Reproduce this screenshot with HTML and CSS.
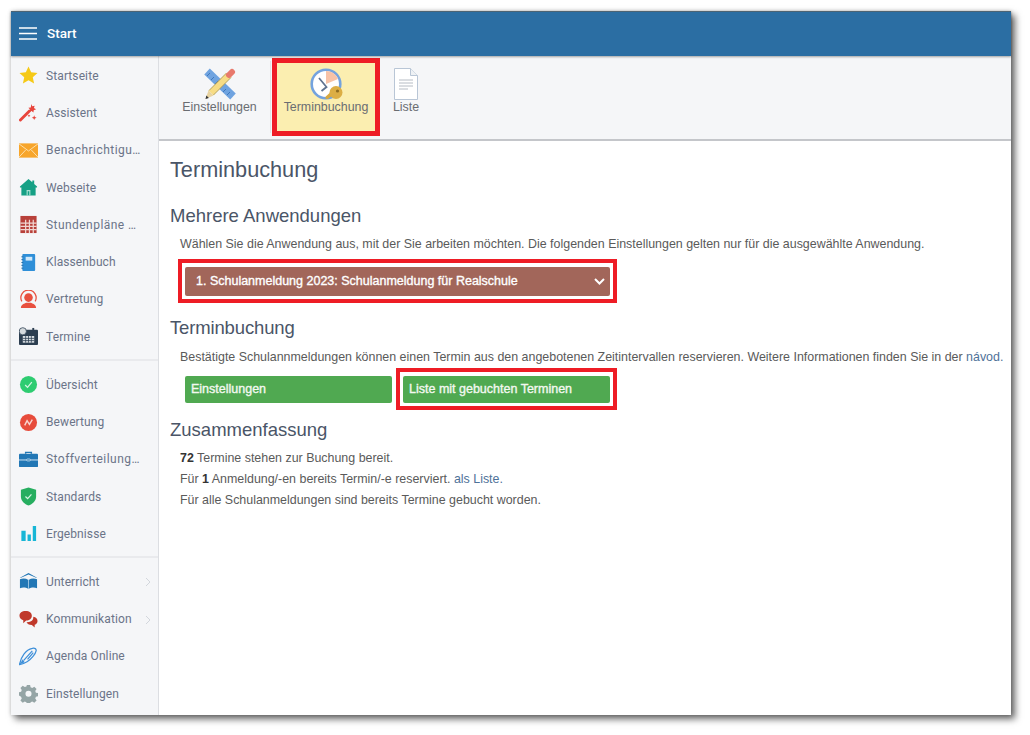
FILE: index.html
```html
<!DOCTYPE html>
<html lang="de">
<head>
<meta charset="utf-8">
<title>Terminbuchung</title>
<link rel="stylesheet" href="styles.css">
</head>
<body>
<div class="window">
  <header class="topbar">
    <svg class="burger" width="18" height="13" viewBox="0 0 18 13"><path d="M0 1h18M0 6.500h18M0 12h18" stroke="#fff" stroke-width="1.500"/></svg>
    <span class="top-title">Start</span>
  </header>
  <div class="body">
    <nav class="sidebar">
      <div class="group">
        <a class="item"><svg class="ico" viewBox="0 0 20 20"><path d="M10 .5l2.800 6.200 6.700.7-5 4.500 1.400 6.600L10 15.100l-5.900 3.400 1.400-6.600-5-4.500 6.700-.7z" fill="#f5c916"/></svg><span>Startseite</span></a>
        <a class="item"><svg class="ico" viewBox="0 0 20 20"><path d="M1.500 18L11 8.500" stroke="#e8453c" stroke-width="3" stroke-linecap="round"/><path d="M13 1l1 2.500 2.500-.7-.8 2.500 2.300 1.200-2.500 1-.3 2.500-2-1.700-2.300 1 .8-2.500-1.800-1.800 2.500-.2z" fill="#e8453c"/><path d="M16 13l.7 1.800 1.800.7-1.800.7-.7 1.800-.7-1.800-1.800-.7 1.800-.7zM10.500 12l.5 1 1 .5-1 .5-.5 1-.5-1-1-.5 1-.5z" fill="#e8453c"/></svg><span>Assistent</span></a>
        <a class="item"><svg class="ico" viewBox="0 0 20 20"><rect y="2.500" width="20" height="15" fill="#f7a52b"/><path d="M0 3l10 7.500L20 3M0 17l7-7.500M20 17l-7-7.500" fill="none" stroke="#fde2b0" stroke-width="1"/></svg><span class="trunc">Benachrichtigu…</span></a>
        <a class="item"><svg class="ico" viewBox="0 0 20 20"><path d="M10 1L1 9v1h1.500v8.500h15V10H19V9l-3-2.700V2.500h-2v2z" fill="#16a085"/><path d="M8 18.500v-6h4v6h-1.200v-4.500H9.200v4.500z" fill="#a8e0d2"/></svg><span>Webseite</span></a>
        <a class="item"><svg class="ico" viewBox="0 0 20 20"><rect x="1.500" y="1" width="17" height="18" fill="#b8403a"/><path d="M7 5v14M11 5v14M15 5v14M1.500 8.500h17M1.500 12h17M1.500 15.500h17" stroke="#f0d6d2" stroke-width="1.300"/></svg><span class="trunc">Stundenpläne …</span></a>
        <a class="item"><svg class="ico" viewBox="0 0 20 20"><rect x="3.500" y="1" width="13.500" height="18" rx="1" fill="#2f8fd8"/><rect x="7" y="4" width="7" height="4" fill="#cfe8fa"/><path d="M2.500 4h2M2.500 7h2M2.500 10h2M2.500 13h2M2.500 16h2" stroke="#1d6aa5" stroke-width="1"/></svg><span>Klassenbuch</span></a>
        <a class="item"><svg class="ico" viewBox="0 0 20 20"><path d="M3 12A8 8 0 1 1 17 12" fill="none" stroke="#e8503f" stroke-width="1.300"/><circle cx="10" cy="8" r="4.500" fill="#e8503f"/><path d="M2 19c0-4 4-4.500 5.500-5.500h5C14 14.500 18 15 18 19z" fill="#e8503f"/></svg><span>Vertretung</span></a>
        <a class="item"><svg class="ico" viewBox="0 0 20 20"><rect y="3" width="20" height="16" rx="1" fill="#2c3e50"/><circle cx="4" cy="4.500" r="3.800" fill="#d5dadd" stroke="#2c3e50" stroke-width=".8"/><rect x="14" y="1" width="2" height="4" fill="#2c3e50"/><path d="M4 9.500h12v7H4z" fill="#d9dee2"/><path d="M7 9.500v7M10 9.500v7M13 9.500v7M4 12h12M4 14.300h12" stroke="#2c3e50" stroke-width=".8"/></svg><span>Termine</span></a>
      </div>
      <div class="group">
        <a class="item"><svg class="ico" viewBox="0 0 20 20"><circle cx="10" cy="10" r="9" fill="#2ecc71"/><path d="M6.500 10.500l2.500 2.500 4.500-5.500" fill="none" stroke="#d6f5e3" stroke-width="1.300"/></svg><span>Übersicht</span></a>
        <a class="item"><svg class="ico" viewBox="0 0 20 20"><circle cx="10" cy="10" r="9" fill="#e74c3c"/><path d="M6 13l2.500-5 2.500 4 3-5" fill="none" stroke="#f9d4cf" stroke-width="1.500"/></svg><span>Bewertung</span></a>
        <a class="item"><svg class="ico" viewBox="0 0 20 20"><path d="M7 4V2.500h6V4" fill="none" stroke="#2277b5" stroke-width="1.500"/><rect y="4" width="20" height="14" rx="1" fill="#2277b5"/><path d="M0 10.500h20" stroke="#d5e8f5" stroke-width="1"/><rect x="8" y="9.500" width="4" height="2" rx="1" fill="#2277b5" stroke="#d5e8f5" stroke-width=".8"/></svg><span class="trunc">Stoffverteilung…</span></a>
        <a class="item"><svg class="ico" viewBox="0 0 20 20"><path d="M10 .5L18 3v7c0 5-4 8-8 9.500C6 18 2 15 2 10V3z" fill="#27ae60"/><path d="M6.800 10l2.300 2.300 4-4.500" fill="none" stroke="#d6f5e3" stroke-width="1.300"/></svg><span>Standards</span></a>
        <a class="item"><svg class="ico" viewBox="0 0 20 20"><path d="M2.500 7h4.500v11H2.500zM9 11h3.500v7H9zM14.500 2H18v16h-3.500z" fill="#17b6d6"/></svg><span>Ergebnisse</span></a>
      </div>
      <div class="group group-last">
        <a class="item"><svg class="ico" viewBox="0 0 20 20"><path d="M10 1L1 6h1l8-3.500L18 6h1z" fill="#2277b5"/><path d="M1 7.500c3-1 6-1 9 .8 3-1.800 6-1.800 9-.8V17c-3-1-6-1-9 1-3-2-6-2-9-1z" fill="#2277b5"/><path d="M10 8.300V18" stroke="#bcd9ee" stroke-width=".8"/></svg><span>Unterricht</span><svg class="chev" width="6" height="10" viewBox="0 0 6 10"><path d="M1 1l4 4-4 4" fill="none" stroke="#d3d7dd" stroke-width="1"/></svg></a>
        <a class="item"><svg class="ico" viewBox="0 0 20 20"><path d="M7 1c4 0 6.500 2 6.500 5s-2.500 5-6 5l-3 3v-3.300C2 10 .5 8.500.5 6 .5 3 3 1 7 1z" fill="#c0392b"/><path d="M15 7c3 .5 4.500 2 4.500 4.500 0 2-1 3.300-3 4v3l-3-2.800c-3 0-5-1-5.500-3 4 .5 7.500-2 7-5.700z" fill="#c0392b"/></svg><span>Kommunikation</span><svg class="chev" width="6" height="10" viewBox="0 0 6 10"><path d="M1 1l4 4-4 4" fill="none" stroke="#d3d7dd" stroke-width="1"/></svg></a>
        <a class="item"><svg class="ico" viewBox="0 0 20 20"><path d="M.5 18.500C2 10 7 3 14 1.500c2.500-.8 4.500.5 4 2.500-.5 3-5 9-9.500 11.500C6 17 3 18 .5 18.500z" fill="none" stroke="#3d8fd9" stroke-width="1.300"/><path d="M5 14L14 4M9 13l6-7" stroke="#3d8fd9" stroke-width="1.300"/><path d="M.5 18.500L4 13l2 3z" fill="#3d8fd9"/></svg><span>Agenda Online</span></a>
        <a class="item"><svg class="ico" viewBox="0 0 20 20"><path fill-rule="evenodd" d="M8.300 1h3.400l.5 2.500 1.700.7 2.200-1.400 2.400 2.400-1.400 2.200.7 1.700 2.200.5v3.400l-2.200.5-.7 1.700 1.400 2.200-2.400 2.400-2.200-1.400-1.700.7-.5 2.200H8.300l-.5-2.200-1.700-.7-2.200 1.400-2.400-2.400 1.400-2.200-.7-1.700L0 12v-3.400l2.200-.5.7-1.700-1.400-2.200 2.400-2.400 2.200 1.400 1.700-.7zM10 7a3.200 3.200 0 1 0 0 6.400A3.200 3.200 0 0 0 10 7z" fill="#95a5a6"/></svg><span>Einstellungen</span></a>
      </div>
    </nav>
    <div class="main">
      <div class="toolbar">
        <a class="tool tool-first"><svg class="tool-ico" viewBox="0 0 32 32"><path d="M3 3.500l26 25" stroke="#6fa3e0" stroke-width="8"/><path d="M3 8l3-3M7 12l3-3M11 16l3-3M15 20l3-3M19 24l3-3M23 27l3-3" stroke="#3f78bd" stroke-width="1"/><path d="M7 25L25 7" stroke="#f7dc85" stroke-width="6.500"/><path d="M5 22.500L22.500 5M9.500 27L27 9.500" stroke="#a58f4a" stroke-width=".8"/><path d="M25 7l3-3" stroke="#e8796c" stroke-width="6" stroke-linecap="round"/><path d="M4.500 22.500l5 5L1.500 31z" fill="#e8d3a0"/><path d="M1.500 31l.9-3.400 2.500 2.500z" fill="#333"/></svg><span>Einstellungen</span></a>
        <div class="tool-sep"></div>
        <a class="tool tool-active"><svg class="tool-ico tool-ico-wide" viewBox="0 0 34 32"><circle cx="17" cy="16" r="14.300" fill="#fff" stroke="#74a3de" stroke-width="2.600"/><path d="M17 16V3a13 13 0 0 1 12 8z" fill="#f7c2a6"/><path d="M10 10l7.500 9-5 4" fill="none" stroke="#5f7390" stroke-width="1.800"/><path d="M24 27l-5 4-2.500-.2 0-2 5.500-5z" fill="#d8a93e"/><circle cx="27" cy="24.500" r="6.500" fill="#dcae45"/><circle cx="28.500" cy="23" r="1.600" fill="#8f6d20"/></svg><span>Terminbuchung</span></a>
        <a class="tool tool-list"><svg class="tool-ico" viewBox="0 0 32 32"><path d="M4.500 .5h16l7 7v24h-23z" fill="#fff" stroke="#b9c6d6"/><path d="M20.500 .5v7h7" fill="#eef1f4" stroke="#b9c6d6"/><path d="M9 12h14M9 15h14M9 18h14M9 21h9" stroke="#b6bcc4" stroke-width="1"/></svg><span>Liste</span></a>
      </div>
      <main class="content">
        <h1>Terminbuchung</h1>
        <h2 class="h-first">Mehrere Anwendungen</h2>
        <p class="lead lead-first">Wählen Sie die Anwendung aus, mit der Sie arbeiten möchten. Die folgenden Einstellungen gelten nur für die ausgewählte Anwendung.</p>
        <div class="select-mark">
          <div class="select"><span>1. Schulanmeldung 2023: Schulanmeldung für Realschule</span><svg width="11" height="7" viewBox="0 0 11 7"><path d="M1 1l4.500 4.500L10 1" fill="none" stroke="#fff" stroke-width="2"/></svg></div>
        </div>
        <h2 class="h-second">Terminbuchung</h2>
        <p class="lead lead-second">Bestätigte Schulannmeldungen können einen Termin aus den angebotenen Zeitintervallen reservieren. Weitere Informationen finden Sie in der <a class="link">návod.</a></p>
        <div class="btns">
          <a class="btn">Einstellungen</a>
          <div class="btn-mark"><a class="btn">Liste mit gebuchten Terminen</a></div>
        </div>
        <h2 class="h-third">Zusammenfassung</h2>
        <div class="summary">
          <p><b>72</b> Termine stehen zur Buchung bereit.</p>
          <p>Für <b>1</b> Anmeldung/-en bereits Termin/-e reserviert. <a class="link">als Liste.</a></p>
          <p>Für alle Schulanmeldungen sind bereits Termine gebucht worden.</p>
        </div>
      </main>
    </div>
  </div>
</div>
</body>
</html>
```

FILE: styles.css
```css
* { box-sizing: border-box; }
html, body { margin: 0; height: 100%; overflow: hidden; background: #fff; }
body { padding: 11px 19px 20px 11px; font-family: "Liberation Sans", Arial, sans-serif; }
.window {
  width: 1000px; height: 704px; display: flex; flex-direction: column; background: #fff;
  box-shadow: 4px 4px 7px rgba(0,0,0,.6), 0 0 4px rgba(0,0,0,.2);
}
.topbar {
  height: 45px; flex: none; background: #2b6ea3; display: flex; align-items: center; padding-left: 8px;
  box-shadow: 0 1px 2px rgba(0,0,0,.35), inset 0 1px 0 #4d6474; position: relative; z-index: 2;
}
.top-title { color: #fff; font: 500 13.500px Roboto, sans-serif; margin: 0 0 2px 10px; }
.body { flex: 1; display: flex; min-height: 0; }
.sidebar { width: 148px; flex: none; background: #f5f6f8; border-right: 1px solid #dcdee2; padding-top: 1px; }
.group { border-bottom: 2px solid #e9eaed; padding-bottom: 3.500px; margin-bottom: 5.200px; }
.group-last { border-bottom: 0; padding: 0; margin: 0; }
.item { display: flex; align-items: center; height: 37.300px; padding-left: 8px; color: #6b7488; font: 12px/16px Roboto, sans-serif; position: relative; }
.item span { margin-left: 8px; white-space: nowrap; letter-spacing: .1px; }
.item .trunc { letter-spacing: .45px; }
.ico { width: 19px; height: 19px; flex: none; }
.chev { position: absolute; right: 7px; top: 14px; }
.main { flex: 1; display: flex; flex-direction: column; min-width: 0; }
.toolbar {
  height: 85px; flex: none; background: #f5f6f8; border-bottom: 2px solid #c4c6ca; display: flex; padding: 2px 0 0 19.500px;
}
.tool { display: flex; flex-direction: column; align-items: center; color: #6a6d72; font: 12.400px/16px "Liberation Sans", sans-serif; white-space: nowrap; padding-top: 10px; }
.tool-first { width: 82px; }
.tool-ico { width: 32px; height: 32px; margin-bottom: -1px; flex: none; }
.tool-ico-wide { width: 34px; }
.tool-sep { width: 1px; height: 72px; margin: 3px 0 0 9px; background: #e3e5e8; }
.tool-active {
  width: 108px; height: 78px; margin-left: 1.500px; padding-top: 5px; background: #fbeeb0; border: 5px solid #ee1c25;
}
.tool-list { width: 52px; }
.content { padding: 16px 0 0 11px; color: #5a5a5a; font-size: 12.430px; }
h1 { font: 400 21.700px/26px "Liberation Sans", sans-serif; color: #4a5567; margin: 0; }
h2 { font: 400 18.500px/22px "Liberation Sans", sans-serif; color: #4a5567; margin: 0; }
.h-first { margin-top: 22px; }
.h-second { margin-top: 14px; letter-spacing: -.15px; }
.h-third { margin-top: 9px; }
.lead { margin: 0 0 0 10px; line-height: 14px; white-space: nowrap; }
.lead-first { margin-top: 10px; margin-bottom: -1px; }
.lead-second { margin-top: 11px; margin-bottom: -1px; }
.link { color: #4f7299; }
.select-mark { width: 439px; height: 44px; margin: 9px 0 0 8px; border: 4px solid #ee1c25; padding: 4px 3px 3px; background: #fff; }
.select {
  height: 29px; background: #a2665a; color: #fff; font: 400 12.500px/29px "Liberation Sans", sans-serif; -webkit-text-stroke: .35px #fff; display: flex; justify-content: space-between; align-items: center; padding: 0 5px 0 11px; border-radius: 2px;
}
.btns { display: flex; align-items: flex-start; margin: 5px 0 0 15px; }
.btns > .btn { margin-top: 8px; }
.btn { width: 207px; height: 27px; background: #50a951; color: #f3f8f0; font: 400 12.500px/27px "Liberation Sans", sans-serif; -webkit-text-stroke: .35px #f3f8f0; padding-left: 6px; border-radius: 2px; display: block; }
.btn-mark { width: 221px; height: 42px; margin-left: 4px; border: 4px solid #ee1c25; padding: 4px 3px 3px; background: #fff; }
.summary { margin: 7px 0 0 10px; }
.summary p { margin: 0; line-height: 21px; white-space: nowrap; }
.summary b { color: #333; }
```
